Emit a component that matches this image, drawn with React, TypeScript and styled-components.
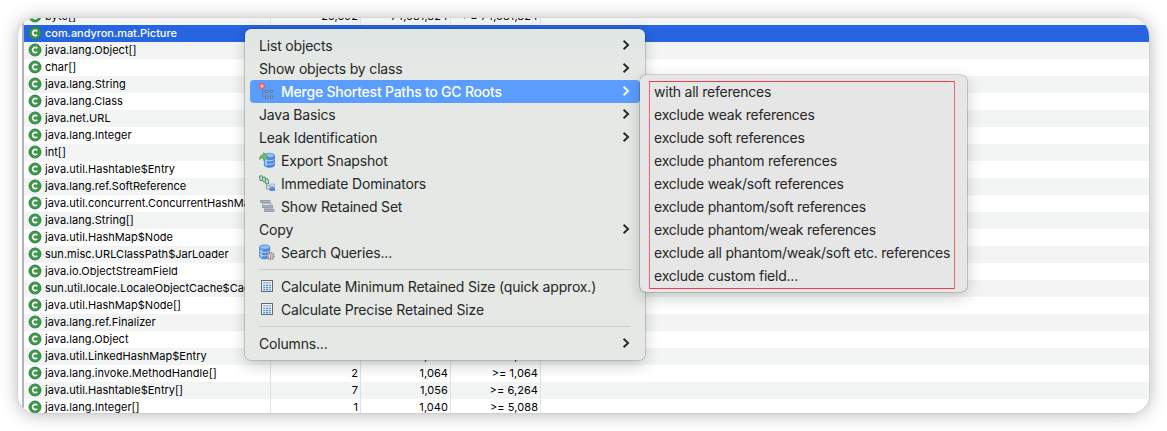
import React from 'react';
import styled, { createGlobalStyle } from 'styled-components';

const GlobalStyle = createGlobalStyle`
  * { box-sizing: border-box; }
  body { margin: 0; background: #fff; overflow: hidden; font-family: Inter, "Liberation Sans", sans-serif; }
`;

const Stage = styled.div`
  position: relative;
  width: 1167px;
  height: 431px;
  padding: 18px;
  overflow: hidden;
`;

const Window = styled.div`
  width: 1131px;
  height: 395px;
  border-radius: 18px;
  overflow: hidden;
  background: #fff;
  display: flex;
  padding-left: 4px;
  box-shadow: 0 0 2px rgba(0, 0, 0, 0.12), 0 1px 18px rgba(0, 0, 0, 0.3);
`;

const Table = styled.div`
  flex: 1;
  min-width: 0;
  height: 405px;
  margin-top: -10px;
  border-left: 2px solid #b4b4b4;
`;

const Row = styled.div<{ $selected?: boolean; $striped?: boolean }>`
  display: flex;
  height: 17px;
  font-size: 11px;
  line-height: 17px;
  letter-spacing: ${(p) => (p.$selected ? -0.05 : 0.03)}px;
  white-space: nowrap;
  font-weight: ${(p) => (p.$selected ? 500 : 400)};
  color: ${(p) => (p.$selected ? '#fff' : '#000')};
  background: ${(p) => (p.$selected ? '#2664e1' : p.$striped ? '#f3f5f5' : '#fff')};
  --rule: ${(p) => (p.$selected ? '#2664e1' : '#e0e1e1')};
`;

const NameCell = styled.div`
  width: 247px;
  display: flex;
  align-items: center;
  gap: 3.5px;
  padding-left: 3.5px;
  overflow: hidden;
  border-right: 1px solid var(--rule);
  svg { flex: none; margin-top: -1px; }
`;

const NumberCell = styled.div`
  width: 90px;
  text-align: right;
  padding-right: 2px;
  letter-spacing: 0.06px;
  border-right: 1px solid var(--rule);
`;

const Menu = styled.div<{ $left: number; $top: number; $width: number; $tone: string; $spacing: number }>`
  position: absolute;
  left: ${(p) => p.$left}px;
  top: ${(p) => p.$top}px;
  width: ${(p) => p.$width}px;
  padding: 5px;
  border-radius: 6px;
  letter-spacing: ${(p) => p.$spacing}px;
  background: ${(p) => p.$tone};
  box-shadow: 0 0 0 0.6px rgba(0, 0, 0, 0.28), 0 5px 16px rgba(0, 0, 0, 0.2);
`;

const Item = styled.div<{ $active?: boolean }>`
  display: flex;
  align-items: center;
  height: 23px;
  padding: 0 10px 0 9px;
  border-radius: 4px;
  font-size: 14px;
  line-height: 23px;
  white-space: nowrap;
  font-weight: ${(p) => (p.$active ? 500 : 400)};
  ${(p) => p.$active && 'letter-spacing: -0.22px;'}
  color: ${(p) => (p.$active ? '#fff' : '#262727')};
  background: ${(p) => (p.$active ? '#5b9dfe' : 'transparent')};
`;

const IconSlot = styled.span`
  display: flex;
  width: 22px;
  flex: none;
  margin-top: -1px;
`;

const Label = styled.span`
  flex: 1;
`;

const Arrow = styled.svg`
  margin-top: -2px;
`;

const Separator = styled.div`
  height: 11px;
  padding: 5px 9px;
  &::before {
    content: '';
    display: block;
    height: 1px;
    background: #cbcdcb;
  }
`;

const Highlight = styled.div`
  position: absolute;
  left: 9px;
  top: 6px;
  width: 306px;
  height: 208px;
  border: 1px solid #ee3b49;
  border-left-color: #ef6670;
  border-right-color: #ef6670;
`;

const ClassIcon = () => (
  <svg width="14" height="14" viewBox="0 0 14 14">
    <circle cx="7" cy="7" r="6" fill="#3a9a44" stroke="#2c7b4f" strokeWidth="0.9" />
    <path d="M9.2 5.3A2.6 2.6 0 1 0 9.2 8.7" fill="none" stroke="#fff" strokeWidth="1.7" />
  </svg>
);

const Chevron = () => (
  <Arrow width="8" height="12" viewBox="0 0 8 12">
    <path d="M1.6 1.8L6.1 6L1.6 10.2" fill="none" stroke="currentColor" strokeWidth="1.9" />
  </Arrow>
);

const PathsIcon = () => (
  <svg width="16" height="16" viewBox="0 0 16 16">
    <path d="M3.5 5V14H8M3.5 8.5H8M10 8.5h2M10 14h2" fill="none" stroke="#707e99" strokeWidth="1" />
    <g fill="#8db0dc" stroke="#69778f" strokeWidth="0.9">
      <rect x="6.4" y="7.4" width="2.2" height="2.2" />
      <rect x="11.4" y="7.4" width="2.2" height="2.2" />
      <rect x="6.4" y="12.9" width="2.2" height="2.2" />
      <rect x="11.4" y="12.9" width="2.2" height="2.2" />
    </g>
    <circle cx="3" cy="3" r="2.4" fill="#ffb5ac" stroke="#ee5c5c" strokeWidth="1.3" />
  </svg>
);

const Drum = () => (
  <>
    <path d="M1 3v9.4c0 3 10 3 10 0V3z" fill="#4d8ce0" stroke="#3672c8" strokeWidth="0.8" />
    <path d="M2.6 4.5v9" stroke="#a5cdf8" strokeWidth="1.6" />
    <ellipse cx="6" cy="3" rx="5" ry="2.2" fill="#94c1f5" stroke="#3f7fd4" strokeWidth="0.8" />
    <path d="M1 6.5c1 2.2 9 2.2 10 0M1 10c1 2.2 9 2.2 10 0" fill="none" stroke="#c0dcfa" strokeWidth="0.9" />
  </>
);

const ExportIcon = () => (
  <svg width="16" height="16" viewBox="0 0 16 16">
    <g transform="translate(4.4 0.6)"><Drum /></g>
    <path d="M0.7 7.4C0.7 4 2.5 2.7 4.7 2.8V0.8L9 4.7L4.7 8.4V6C3 5.8 1.7 6.2 0.7 7.4z" fill="#79bb6b" stroke="#3f914b" strokeWidth="0.8" />
  </svg>
);

const DominatorsIcon = () => (
  <svg width="16" height="16" viewBox="0 0 16 16">
    <g fill="#d5eadb" stroke="#419069" strokeWidth="1">
      <rect x="0.7" y="0.8" width="2.8" height="4.6" rx="1" transform="rotate(-12 2 3)" />
      <rect x="3.6" y="2.2" width="2.8" height="4.8" rx="1" transform="rotate(-12 5 4)" />
      <rect x="6.4" y="3.8" width="2.8" height="5" rx="1" transform="rotate(-12 8 6)" />
    </g>
    <path d="M7.5 9v5H11M7.5 10.8H11" fill="none" stroke="#8b9ba9" />
    <rect x="11" y="9" width="4.5" height="2.6" fill="#cce0f7" stroke="#85a6cb" strokeWidth="0.7" />
    <rect x="11" y="12.8" width="4.5" height="2.7" fill="#4f8fe4" stroke="#3d75bf" strokeWidth="0.7" />
  </svg>
);

const RetainedIcon = () => (
  <svg width="16" height="16" viewBox="0 0 16 16">
    <g fill="#9ab6dc" stroke="#9b9ea2" strokeWidth="1">
      <rect x="1.5" y="2.5" width="9.5" height="2" />
      <rect x="3.5" y="7.5" width="10" height="2" />
      <rect x="5.5" y="11.5" width="9.5" height="2" />
    </g>
    <path d="M3.5 5v3M5.5 10v2M11.5 5v2" stroke="#9b9ea2" />
    <path d="M3 5.5h10M5 10.5h9" stroke="#b5b8bb" />
  </svg>
);

const QueriesIcon = () => (
  <svg width="16" height="16" viewBox="0 0 16 16">
    <g transform="translate(-0.3 0.2)"><Drum /></g>
    <circle cx="11.6" cy="12" r="3.3" fill="#f2e8e8" stroke="#8b8080" strokeWidth="1.5" strokeDasharray="1.5 0.7" />
    <circle cx="11.6" cy="12" r="2.3" fill="#f8f1f1" stroke="#8b8080" strokeWidth="0.6" />
    <path d="M11.6 10.4v3.3" stroke="#c26666" strokeWidth="1.2" />
  </svg>
);

const CalculatorIcon = () => (
  <svg width="16" height="16" viewBox="0 0 16 16">
    <rect x="2.5" y="2.5" width="11" height="11" fill="#f1f3f5" stroke="#666a70" strokeWidth="1" />
    <rect x="4" y="4" width="8" height="1.6" fill="#aebdd2" />
    <g fill="#4b8ee5">
      {[6.7, 8.9, 11].map((y) => [4.2, 7, 9.8].map((x) => (
        <rect key={`${x}-${y}`} x={x} y={y} width="2" height="1.4" />
      )))}
    </g>
  </svg>
);

type Entry = { name: string; values?: string[]; selected?: boolean };

const entries: Entry[] = [
  { name: 'byte[]', values: ['25,692', '74,681,824', '>= 74,681,824'] },
  { name: 'com.andyron.mat.Picture', selected: true },
  { name: 'java.lang.Object[]' },
  { name: 'char[]' },
  { name: 'java.lang.String' },
  { name: 'java.lang.Class' },
  { name: 'java.net.URL' },
  { name: 'java.lang.Integer' },
  { name: 'int[]' },
  { name: 'java.util.Hashtable$Entry' },
  { name: 'java.lang.ref.SoftReference' },
  { name: 'java.util.concurrent.ConcurrentHashMap$Node' },
  { name: 'java.lang.String[]' },
  { name: 'java.util.HashMap$Node' },
  { name: 'sun.misc.URLClassPath$JarLoader' },
  { name: 'java.io.ObjectStreamField' },
  { name: 'sun.util.locale.LocaleObjectCache$CacheEntry' },
  { name: 'java.util.HashMap$Node[]' },
  { name: 'java.lang.ref.Finalizer' },
  { name: 'java.lang.Object' },
  { name: 'java.util.LinkedHashMap$Entry', values: ['27', '1,080', '>= 1,080'] },
  { name: 'java.lang.invoke.MethodHandle[]', values: ['2', '1,064', '>= 1,064'] },
  { name: 'java.util.Hashtable$Entry[]', values: ['7', '1,056', '>= 6,264'] },
  { name: 'java.lang.Integer[]', values: ['1', '1,040', '>= 5,088'] },
];

type Action = { label: string; icon?: React.ReactNode; submenu?: boolean; active?: boolean };

const groups: Action[][] = [
  [
    { label: 'List objects', submenu: true },
    { label: 'Show objects by class', submenu: true },
    { label: 'Merge Shortest Paths to GC Roots', icon: <PathsIcon />, submenu: true, active: true },
    { label: 'Java Basics', submenu: true },
    { label: 'Leak Identification', submenu: true },
    { label: 'Export Snapshot', icon: <ExportIcon /> },
    { label: 'Immediate Dominators', icon: <DominatorsIcon /> },
    { label: 'Show Retained Set', icon: <RetainedIcon /> },
    { label: 'Copy', submenu: true },
    { label: 'Search Queries...', icon: <QueriesIcon /> },
  ],
  [
    { label: 'Calculate Minimum Retained Size (quick approx.)', icon: <CalculatorIcon /> },
    { label: 'Calculate Precise Retained Size', icon: <CalculatorIcon /> },
  ],
  [{ label: 'Columns...', submenu: true }],
];

const referenceFilters = [
  'with all references',
  'exclude weak references',
  'exclude soft references',
  'exclude phantom references',
  'exclude weak/soft references',
  'exclude phantom/soft references',
  'exclude phantom/weak references',
  'exclude all phantom/weak/soft etc. references',
  'exclude custom field...',
];

export default function App() {
  return (
    <Stage>
      <GlobalStyle />
      <Window>
        <Table>
          {entries.map((entry, i) => (
            <Row key={i} $selected={entry.selected} $striped={i % 2 === 0}>
              <NameCell><ClassIcon />{entry.name}</NameCell>
              {[0, 1, 2].map((c) => <NumberCell key={c}>{entry.values?.[c]}</NumberCell>)}
            </Row>
          ))}
        </Table>
      </Window>
      <Menu $left={245} $top={29} $width={400} $spacing={-0.18} $tone="linear-gradient(#e0e6e6, #e5e8e4 40px)">
        {groups.map((group, g) => (
          <React.Fragment key={g}>
            {g > 0 && <Separator />}
            {group.map((action) => (
              <Item key={action.label} $active={action.active}>
                {action.icon && <IconSlot>{action.icon}</IconSlot>}
                <Label>{action.label}</Label>
                {action.submenu && <Chevron />}
              </Item>
            ))}
          </React.Fragment>
        ))}
      </Menu>
      <Menu $left={640} $top={75} $width={327} $spacing={-0.22} $tone="#e6e6e6">
        {referenceFilters.map((label) => <Item key={label}>{label}</Item>)}
        <Highlight />
      </Menu>
    </Stage>
  );
}
